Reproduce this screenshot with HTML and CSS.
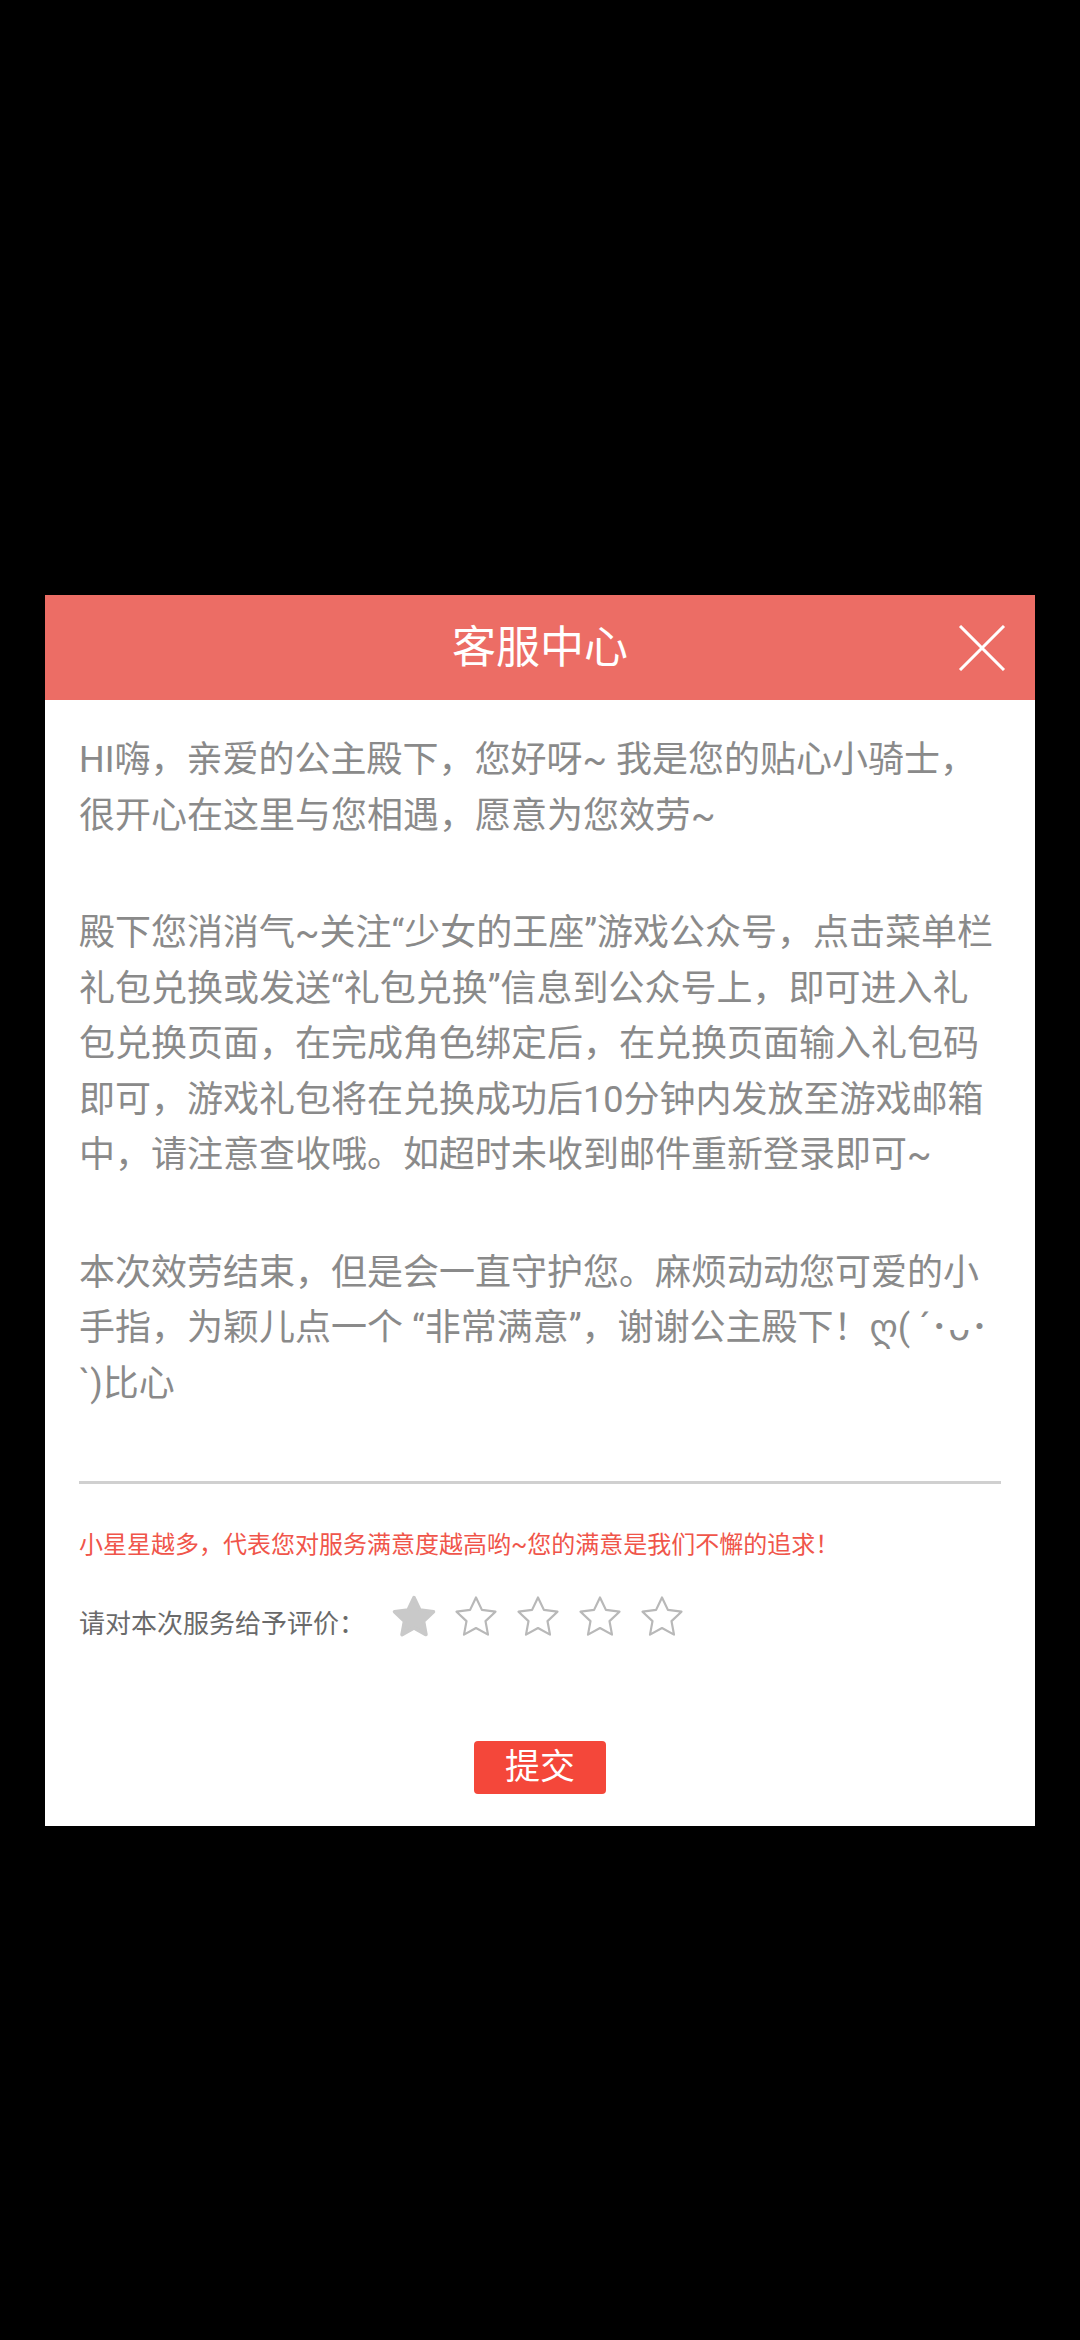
FILE: index.html
```html
<!DOCTYPE html>
<html lang="zh-CN">
<head>
<meta charset="utf-8">
<title>客服中心</title>
<link rel="stylesheet" href="styles.css">
</head>
<body>
<div class="dialog">
  <div class="header">
    <span class="spacer"></span>
    <h1 class="title">客服中心</h1>
    <button class="close" aria-label="关闭">
      <svg width="48" height="46" viewBox="0 0 48 46"><path d="M2 1 L46 45 M46 1 L2 45" stroke="#fff" stroke-width="3" fill="none"/></svg>
    </button>
  </div>
  <div class="content">
    <p class="msg">HI嗨，亲爱的公主殿下，您好呀~ 我是您的贴心小骑士，很开心在这里与您相遇，愿意为您效劳~</p>
    <p class="msg">殿下您消消气~关注“少女的王座”游戏公众号，点击菜单栏礼包兑换或发送“礼包兑换”信息到公众号上，即可进入礼包兑换页面，在完成角色绑定后，在兑换页面输入礼包码即可，游戏礼包将在兑换成功后10分钟内发放至游戏邮箱中，请注意查收哦。如超时未收到邮件重新登录即可~</p>
    <p class="msg">本次效劳结束，但是会一直守护您。麻烦动动您可爱的小手指，为颖儿点一个 “非常满意”，谢谢公主殿下！ღ( ´･ᴗ･<br>`)比心</p>
    <hr class="divider">
    <p class="note">小星星越多，代表您对服务满意度越高哟~您的满意是我们不懈的追求！</p>
    <div class="rating">
      <span class="label">请对本次服务给予评价：</span>
      <div class="stars">
        <svg class="star on" viewBox="0 0 44 44"><path d="M22 2.5 L27.9 14.9 L41.5 16.7 L31.5 26.1 L34 39.6 L22 33 L10 39.6 L12.5 26.1 L2.5 16.7 L16.1 14.9 Z"/></svg>
        <svg class="star" viewBox="0 0 44 44"><path d="M22 2.5 L27.9 14.9 L41.5 16.7 L31.5 26.1 L34 39.6 L22 33 L10 39.6 L12.5 26.1 L2.5 16.7 L16.1 14.9 Z"/></svg>
        <svg class="star" viewBox="0 0 44 44"><path d="M22 2.5 L27.9 14.9 L41.5 16.7 L31.5 26.1 L34 39.6 L22 33 L10 39.6 L12.5 26.1 L2.5 16.7 L16.1 14.9 Z"/></svg>
        <svg class="star" viewBox="0 0 44 44"><path d="M22 2.5 L27.9 14.9 L41.5 16.7 L31.5 26.1 L34 39.6 L22 33 L10 39.6 L12.5 26.1 L2.5 16.7 L16.1 14.9 Z"/></svg>
        <svg class="star" viewBox="0 0 44 44"><path d="M22 2.5 L27.9 14.9 L41.5 16.7 L31.5 26.1 L34 39.6 L22 33 L10 39.6 L12.5 26.1 L2.5 16.7 L16.1 14.9 Z"/></svg>
      </div>
    </div>
    <div class="actions">
      <button class="submit">提交</button>
    </div>
  </div>
</div>
</body>
</html>
```

FILE: styles.css
```css
html, body {
  margin: 0;
  padding: 0;
  background: #000;
}
body {
  width: 1080px;
  height: 2340px;
  font-family: Roboto, "Noto Sans CJK SC", "DejaVu Sans", sans-serif;
  padding-top: 595px;
  box-sizing: border-box;
}
.dialog {
  width: 990px;
  margin-left: 45px;
  background: #fff;
}
.header {
  height: 105px;
  background: #ec6d65;
  display: grid;
  grid-template-columns: 1fr auto 1fr;
  align-items: center;
}
.title {
  margin: 0;
  font-size: 44px;
  font-weight: normal;
  color: #fff;
  line-height: 1;
}
.close {
  justify-self: end;
  margin-right: 29px;
  padding: 0;
  border: 0;
  background: transparent;
  width: 48px;
  height: 46px;
  display: flex;
}
.content {
  padding: 33px 34px 32px 34px;
}
.msg {
  margin: 0 7px 62px 0;
  font-size: 36px;
  line-height: 55.5px;
  color: #8a8a8a;
}
.msg:nth-of-type(3) {
  margin-bottom: 0;
}
.divider {
  margin: 69px 0 0;
  border: 0;
  height: 3px;
  background: #d0d0d0;
}
.note {
  margin: 44px 0 0;
  font-size: 24px;
  line-height: 34px;
  color: #f0554a;
}
.rating {
  margin-top: 30px;
  display: flex;
  align-items: center;
}
.label {
  font-size: 26px;
  line-height: 36px;
  color: #6a6a6a;
  padding-top: 14px;
  margin-right: 27px;
}
.stars {
  display: flex;
  gap: 18px;
}
.star {
  width: 44px;
  height: 44px;
}
.star path {
  fill: #fff;
  stroke: #b8b8b8;
  stroke-width: 2.2;
  stroke-linejoin: round;
}
.star.on path {
  fill: #c9c9c9;
  stroke: #c9c9c9;
  stroke-width: 3.5;
}
.actions {
  margin-top: 99px;
  display: flex;
  justify-content: center;
}
.submit {
  width: 132px;
  height: 53px;
  border: 0;
  border-radius: 4px;
  background: #f4473a;
  color: #fff;
  font-family: Roboto, "Noto Sans CJK SC", sans-serif;
  font-size: 35px;
  line-height: 53px;
  padding: 0;
  margin-left: 0;
}
```
